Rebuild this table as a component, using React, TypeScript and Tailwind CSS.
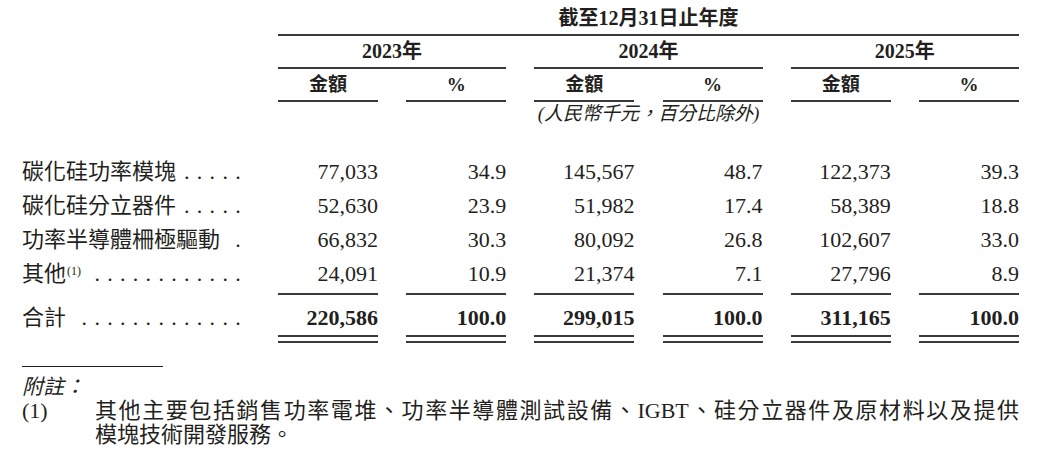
const years = ['2023', '2024', '2025']

const rows = [
  { label: '碳化硅功率模塊', sup: '', dots: 5, values: ['77,033', '34.9', '145,567', '48.7', '122,373', '39.3'] },
  { label: '碳化硅分立器件', sup: '', dots: 5, values: ['52,630', '23.9', '51,982', '17.4', '58,389', '18.8'] },
  { label: '功率半導體柵極驅動', sup: '', dots: 1, values: ['66,832', '30.3', '80,092', '26.8', '102,607', '33.0'] },
  { label: '其他', sup: '(1)', dots: 12, values: ['24,091', '10.9', '21,374', '7.1', '27,796', '8.9'] },
]

const total = ['220,586', '100.0', '299,015', '100.0', '311,165', '100.0']

function Line() {
  return <div className="h-[2px] bg-[#3a3a3a]" />
}

// leader dots, right-aligned against the label column edge
function Leader({ count }: { count: number }) {
  return (
    <span className="flex-1 flex justify-end whitespace-nowrap tracking-[7.3px]">
      {'.'.repeat(count)}
    </span>
  )
}

function ColumnLines({ double }: { double?: boolean }) {
  return (
    <div className="ml-[256px] flex gap-[28.2px]">
      {total.map((_, i) => (
        <div key={i} className="w-[100px]">
          <Line />
          {double && <div className="mt-[4px]"><Line /></div>}
        </div>
      ))}
    </div>
  )
}

export default function App() {
  return (
    <div className="w-[1040px] h-[452px] overflow-hidden bg-white pl-[22px] pt-[6px] text-[#231f20] font-['Liberation_Serif','Noto_Sans_CJK_TC',serif]">
      <div className="ml-[256px] w-[741px]">
        <div className="h-[24px] leading-[24px] text-center text-[20px] font-bold">截至12月31日止年度</div>
        <div className="mt-[4px]"><Line /></div>
        <div className="flex gap-[28.2px]">
          {years.map((y) => (
            <div key={y} className="w-[228.2px]">
              <div className="h-[31px] leading-[31px] text-center text-[20px] font-bold">{y}年</div>
              <Line />
              <div className="flex gap-[28.2px]">
                <div className="w-[100px]">
                  <div className="h-[31px] leading-[31px] text-center text-[19px] font-bold">金額</div>
                  <Line />
                </div>
                <div className="w-[100px]">
                  <div className="h-[31px] leading-[31px] text-center text-[19px] font-bold">%</div>
                  <Line />
                </div>
              </div>
              <div className="h-[24px] leading-[24px] text-center text-[19px] italic whitespace-nowrap">
                {y === '2024' ? '(人民幣千元，百分比除外)' : ''}
              </div>
            </div>
          ))}
        </div>
      </div>

      <div className="mt-[29px] text-[22px]">
        {rows.map((r) => (
          <div key={r.label} className="flex h-[34px] leading-[34px]">
            <div className="w-[226px] flex">
              <span className="whitespace-nowrap">
                {r.label}
                {r.sup && <sup className="text-[12px] ml-[1px]">{r.sup}</sup>}
              </span>
              <Leader count={r.dots} />
            </div>
            <div className="ml-[30px] flex gap-[28.2px]">
              {r.values.map((v, i) => (
                <div key={i} className="w-[100px] text-right">{v}</div>
              ))}
            </div>
          </div>
        ))}
      </div>

      <div className="mt-[2px]"><ColumnLines /></div>

      <div className="mt-[6px] flex h-[34px] leading-[34px] text-[22px]">
        <div className="w-[226px] flex">
          <span className="whitespace-nowrap">合計</span>
          <Leader count={13} />
        </div>
        <div className="ml-[30px] flex gap-[28.2px] font-bold">
          {total.map((v, i) => (
            <div key={i} className="w-[100px] text-right">{v}</div>
          ))}
        </div>
      </div>

      <ColumnLines double />

      <div className="mt-[23px] w-[141px] h-px bg-[#231f20]" />
      <div className="mt-[8px] h-[24px] leading-[24px] text-[21px] italic">附註：</div>
      <div className="flex text-[22px] leading-[24px]">
        <div className="w-[73px] shrink-0">(1)</div>
        <div className="w-[924px]">
          <div className="text-justify [text-align-last:justify] whitespace-nowrap">
            其他主要包括銷售功率電堆、功率半導體測試設備、IGBT、硅分立器件及原材料以及提供
          </div>
          <div>模塊技術開發服務。</div>
        </div>
      </div>
    </div>
  )
}
